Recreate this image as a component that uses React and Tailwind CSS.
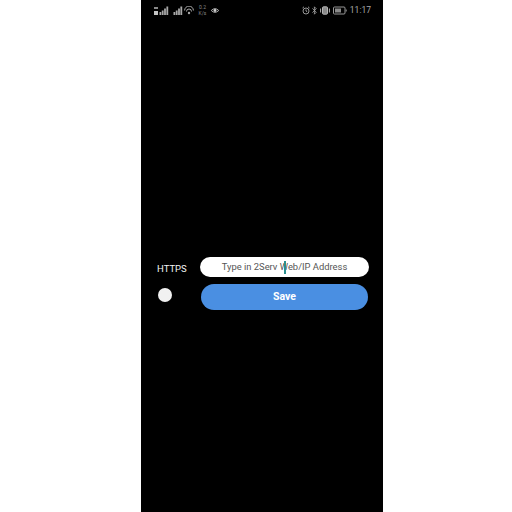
const Bars = ({ wide }) => (
  <svg width={wide ? 15 : 10} height="9" viewBox={wide ? '0 0 15 9' : '5 0 10 9'} fill="#a8a8a8">
    {wide && <rect x="0" y="1" width="4" height="2" fill="#8a8a8a" />}
    {wide && <rect x="0" y="5" width="4" height="4" fill="#c4c4c4" />}
    <rect x="5.5" y="6" width="1.8" height="3" />
    <rect x="7.8" y="4.5" width="1.8" height="4.5" />
    <rect x="10.1" y="2.5" width="1.8" height="6.5" />
    <rect x="12.4" y="0.5" width="1.8" height="8.5" />
  </svg>
);

const StatusBar = () => (
  <div className="flex h-[20px] items-center justify-between pl-[13px] pr-[12px]">
    <div className="flex items-center">
      <Bars wide />
      <div className="ml-[4px]">
        <Bars />
      </div>
      <svg className="ml-[1px]" width="10" height="9" viewBox="0 0 10 9" fill="none" stroke="#a8a8a8" strokeWidth="1">
        <path d="M0.6 4.5a4.4 4.4 0 0 1 8.8 0" />
        <path d="M2.5 5.5a2.5 2.5 0 0 1 5 0" />
        <circle cx="5" cy="7" r="1.2" fill="#a8a8a8" stroke="none" />
      </svg>
      <div className="ml-[4px] flex w-[9px] flex-col items-center text-[5px] leading-[6px] text-[#8a8a8a]">
        <span>0.2</span>
        <span>K/s</span>
      </div>
      <svg className="ml-[4px]" width="8" height="9" viewBox="0 0 9 9" fill="none" stroke="#c0c0c0" strokeWidth="1">
        <path d="M0.3 4.5Q4.5 0.3 8.7 4.5Q4.5 8.7 0.3 4.5Z" />
        <circle cx="4.5" cy="4.5" r="1.6" fill="#d0d0d0" stroke="none" />
      </svg>
    </div>
    <div className="flex items-center">
      <svg width="8" height="9" viewBox="0 0 8 9" fill="none" stroke="#a8a8a8" strokeWidth="0.9">
        <circle cx="4" cy="5" r="3" />
        <path d="M4 3.4V5L5.2 5.8M0.5 2L2 0.8M7.5 2L6 0.8" />
      </svg>
      <svg className="ml-[2px]" width="5" height="9" viewBox="0 0 5 9" fill="none" stroke="#a8a8a8" strokeWidth="0.8">
        <path d="M0.4 2.4L4.3 6.2L2.4 8.2V0.8L4.3 2.8L0.4 6.6" />
      </svg>
      <svg className="ml-[3px]" width="10" height="9" viewBox="0 0 10 9" fill="none" stroke="#b4b4b4" strokeWidth="1">
        <rect x="2.5" y="0.8" width="5" height="7.4" rx="1" fill="#8a8a8a" />
        <path d="M0.6 2.5V6.5M9.4 2.5V6.5" />
      </svg>
      <svg className="ml-[3px]" width="14" height="9" viewBox="0 0 14 9" fill="none" stroke="#a8a8a8" strokeWidth="0.9">
        <rect x="0.5" y="1" width="11.5" height="7" rx="1" />
        <rect x="2" y="2.5" width="6" height="4" fill="#8a8a8a" stroke="none" />
        <path d="M13.2 3.5V5.5" />
      </svg>
      <span className="ml-[3px] text-[8.5px] leading-[10px] text-[#a8a8a8]">11:17</span>
    </div>
  </div>
);

const App = () => {
  return (
    <div className="flex h-[512px] w-full bg-white pl-[141px] font-['Roboto',sans-serif]">
      <div className="flex h-full w-[242px] flex-col bg-black">
        <StatusBar />
        <div className="flex flex-1 items-start pt-[237px]">
          <div className="flex w-[59px] flex-col">
            <span className="mt-[5px] pl-[16px] text-[9.5px] leading-[14px] text-[#f4f4f4]">HTTPS</span>
            <div className="ml-[17px] mt-[12px] h-[14px] w-[14px] rounded-full bg-[#f1f1f1]" />
          </div>
          <div className="flex w-[169px] flex-col gap-[7px]">
            <div className="relative flex h-[20px] items-center justify-center rounded-full bg-white text-[9.4px] text-[#555555]">
              Type in 2Serv Web/IP Address
              <div className="absolute left-[84px] top-[4px] h-[13px] w-[1.5px] bg-[#2a8f8f]" />
            </div>
            <button className="mx-[1px] flex h-[26px] items-center justify-center rounded-full bg-[#4a8fe2] text-[10.5px] font-bold text-white">
              Save
            </button>
          </div>
        </div>
      </div>
    </div>
  );
};

export default App;
